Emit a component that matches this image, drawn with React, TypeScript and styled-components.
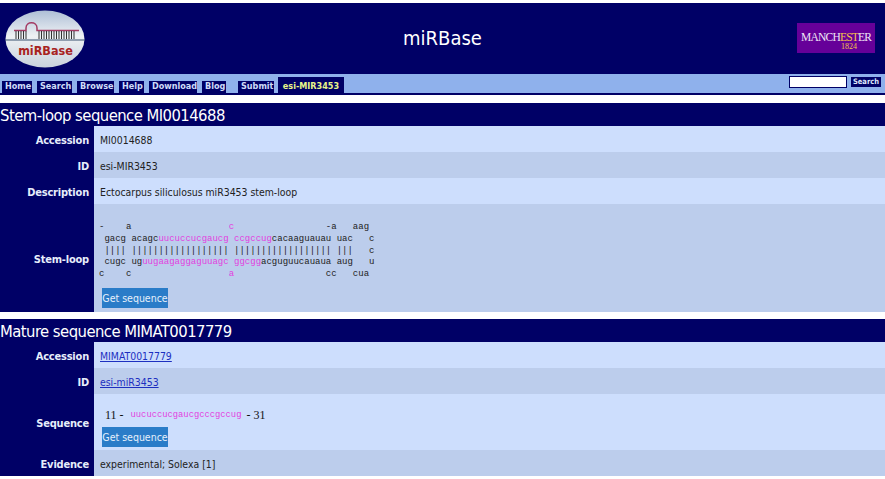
import React from "react";
import styled, { createGlobalStyle } from "styled-components";

const SANS = `"DejaVu Sans Condensed", "DejaVu Sans", sans-serif`;

const Global = createGlobalStyle`
  html, body { margin: 0; padding: 0; background: #fff; overflow: hidden; }
  body { font-family: ${SANS}; font-stretch: condensed; }
`;

const Page = styled.div`
  width: 885px;
  height: 479px;
  padding-top: 3px;
  box-sizing: border-box;
  background: #fff;
  overflow: hidden;
`;

const Header = styled.header`
  height: 71px;
  background: #000066;
  display: flex;
  align-items: center;
  justify-content: space-between;
  padding: 0 10px 0 5px;
  position: relative;
`;

const Title = styled.h1`
  position: absolute;
  left: 0;
  right: 0;
  top: 20px;
  margin: 0;
  text-align: center;
  color: #fff;
  font: 400 20px/30px ${SANS};
  font-stretch: condensed;
`;

const Nav = styled.nav`
  height: 19px;
  background: #8fb1ec;
  border-bottom: 2px solid #000066;
  display: flex;
  align-items: flex-end;
  padding-left: 2px;
`;

const Tab = styled.a<{ $gap?: number; $active?: boolean }>`
  height: ${(p) => (p.$active ? 16 : 12)}px;
  margin-left: ${(p) => p.$gap ?? 5}px;
  padding: 0 3px;
  background: #000066;
  color: ${(p) => (p.$active ? "#e8f58a" : "#cfdcf8")};
  font: 700 9px/13px ${SANS};
  font-stretch: condensed;
  display: flex;
  align-items: flex-end;
  &:first-child { margin-left: 0; }
`;

const TabLabel = styled.span<{ $w: number }>`
  display: block;
  width: ${(p) => p.$w}px;
  text-align: center;
  white-space: nowrap;
  line-height: 13px;
`;

const SearchBox = styled.form`
  margin: 0 0 0 auto;
  display: flex;
  align-items: center;
  gap: 4px;
  padding: 0 4px 3px 0;
  align-self: center;
`;

const SearchInput = styled.div`
  width: 56px;
  height: 10px;
  background: #fff;
  border: 1px solid #000066;
`;

const SearchButton = styled.div`
  width: 30px;
  height: 10px;
  background: #000066;
  color: #dfe8fb;
  font: 700 7.5px/10px ${SANS};
  font-stretch: condensed;
  text-align: center;
`;

const Section = styled.section`
  margin-top: 7px;
`;

const FirstSection = styled(Section)`
  margin-top: 8px;
`;

const Heading = styled.h2`
  height: 23px;
  margin: 0;
  background: #000066;
  color: #fff;
  font: 400 16.5px/25px ${SANS};
  font-stretch: condensed;
  letter-spacing: -0.55px;
  white-space: nowrap;
`;

const Row = styled.div<{ $h: number; $dark?: boolean }>`
  display: flex;
  height: ${(p) => p.$h}px;
  background: ${(p) => (p.$dark ? "#bccdec" : "#cddefd")};
`;

const Label = styled.div`
  width: 89px;
  flex: none;
  background: #000066;
  color: #e6edfb;
  font: 700 11px/1 ${SANS};
  font-stretch: condensed;
  letter-spacing: -0.2px;
  display: flex;
  align-items: center;
  justify-content: flex-end;
  padding: 2px 5px 0 0;
  box-sizing: content-box;
`;

const Value = styled.div<{ $top?: number }>`
  padding: ${(p) => p.$top ?? 2}px 0 0 6px;
  color: #222;
  font: 400 10.4px/1 ${SANS};
  font-stretch: condensed;
  display: flex;
  flex-direction: column;
  justify-content: center;
  align-items: flex-start;
`;

const Link = styled.a`
  color: #1c2fc0;
  text-decoration: underline;
`;

const Fold = styled.pre`
  margin: 0 0 0 -1px;
  font: 400 9px/11.75px "Liberation Mono", monospace;
  color: #222;
`;

const Pink = styled.span`
  color: #e23fe0;
`;

const GetButton = styled.div<{ $top: number }>`
  width: 66px;
  height: 20px;
  margin: ${(p) => p.$top}px 0 0 2px;
  background: #2a7cc8;
  color: #e6f0fb;
  font: 400 10.5px/20px ${SANS};
  font-stretch: condensed;
  text-align: center;
  white-space: nowrap;
`;

const SeqLine = styled.div`
  display: flex;
  align-items: center;
  margin: 0 0 0 5px;
  font: 400 12px/16px "Liberation Serif", serif;
  color: #111;
  white-space: pre;
`;

const SeqText = styled.span`
  font: 400 8.8px/16px "Liberation Mono", monospace;
  color: #e23fe0;
  margin: 0 5px 0 7px;
`;

const Logo = () => (
  <svg width="80" height="58" viewBox="0 0 80 58">
    <defs>
      <linearGradient id="lg" x1="0" y1="0" x2="0" y2="1">
        <stop offset="0" stopColor="#aebfd6" />
        <stop offset="0.45" stopColor="#eef1f4" />
        <stop offset="1" stopColor="#c9d2dc" />
      </linearGradient>
    </defs>
    <ellipse cx="40" cy="29" rx="39.5" ry="28.5" fill="url(#lg)" />
    <path d="M0 30 H80" stroke="#39506e" strokeWidth="1" />
    <path d="M9 20.5 H21 V18 C21 11 32 11 32 18 V20.5 H74" stroke="#a33a63" strokeWidth="1.5" fill="none" />
    <path
      d="M11 21V29M13.5 21V29M16 21V29M18.5 21V29M21 21V29M34 21V29M36.5 21V29M39 21V29M41.5 21V29M44 21V29M46.5 21V29M49 21V29M51.5 21V29M54 21V29M56.5 21V29M59 21V29M61.5 21V29M64 21V29M66.5 21V29M69 21V29"
      stroke="#333"
      strokeWidth="1"
    />
    <text x="40.5" y="45" textAnchor="middle" fontFamily="DejaVu Sans, sans-serif" fontWeight="700" fontSize="12.5" fill="#a8231f" style={{ fontStretch: "condensed" }}>
      miRBase
    </text>
  </svg>
);

const Manchester = () => (
  <svg width="78" height="30" viewBox="0 0 78 30" style={{ marginTop: -2 }}>
    <rect width="78" height="30" fill="#660099" />
    <text x="4" y="18" fontFamily="Liberation Serif, serif" fontSize="11.5" fill="#efe6f5" textLength="71">
      MANCH<tspan fill="#f5c04a">EST</tspan>ER
    </text>
    <text x="44" y="26" fontFamily="Liberation Serif, serif" fontSize="8" fill="#f5c04a">1824</text>
  </svg>
);

export default function App() {
  return (
    <Page>
      <Global />
      <Header>
        <Logo />
        <Title>miRBase</Title>
        <Manchester />
      </Header>
      <Nav>
        <Tab><TabLabel $w={24}>Home</TabLabel></Tab>
        <Tab><TabLabel $w={29}>Search</TabLabel></Tab>
        <Tab><TabLabel $w={31}>Browse</TabLabel></Tab>
        <Tab><TabLabel $w={19}>Help</TabLabel></Tab>
        <Tab><TabLabel $w={42}>Download</TabLabel></Tab>
        <Tab><TabLabel $w={18}>Blog</TabLabel></Tab>
        <Tab $gap={12}><TabLabel $w={30}>Submit</TabLabel></Tab>
        <Tab $gap={4} $active><TabLabel $w={60}>esi-MIR3453</TabLabel></Tab>
        <SearchBox>
          <SearchInput />
          <SearchButton>Search</SearchButton>
        </SearchBox>
      </Nav>
      <FirstSection>
        <Heading>Stem-loop sequence MI0014688</Heading>
        <Row $h={26}><Label>Accession</Label><Value>MI0014688</Value></Row>
        <Row $h={26} $dark><Label>ID</Label><Value>esi-MIR3453</Value></Row>
        <Row $h={26}><Label>Description</Label><Value>Ectocarpus siliculosus miR3453 stem-loop</Value></Row>
        <Row $h={108} $dark>
          <Label>Stem-loop</Label>
          <Value $top={14}>
            <Fold>
              {"-    a                  "}<Pink>c</Pink>{"                 -a   aag\n"}
              {" gacg acagc"}<Pink>uucuccucgaucg ccgccug</Pink>{"cacaaguauau uac   c\n"}
              {" |||| |||||||||||||||||| |||||||||||||||||| |||   c\n"}
              {" cugc ug"}<Pink>uugaagaggaguuagc ggcgg</Pink>{"acguguucauaua aug   u\n"}
              {"c    c                  "}<Pink>a</Pink>{"                 cc   cua"}
            </Fold>
            <GetButton $top={7}>Get sequence</GetButton>
          </Value>
        </Row>
      </FirstSection>
      <Section>
        <Heading>Mature sequence MIMAT0017779</Heading>
        <Row $h={26}><Label>Accession</Label><Value><Link>MIMAT0017779</Link></Value></Row>
        <Row $h={26} $dark><Label>ID</Label><Value><Link>esi-miR3453</Link></Value></Row>
        <Row $h={56}>
          <Label>Sequence</Label>
          <Value $top={10}>
            <SeqLine>11 -<SeqText>uucuccucgaucgcccgccug</SeqText>- 31</SeqLine>
            <GetButton $top={4}>Get sequence</GetButton>
          </Value>
        </Row>
        <Row $h={26} $dark><Label>Evidence</Label><Value>experimental; Solexa [1]</Value></Row>
      </Section>
    </Page>
  );
}
